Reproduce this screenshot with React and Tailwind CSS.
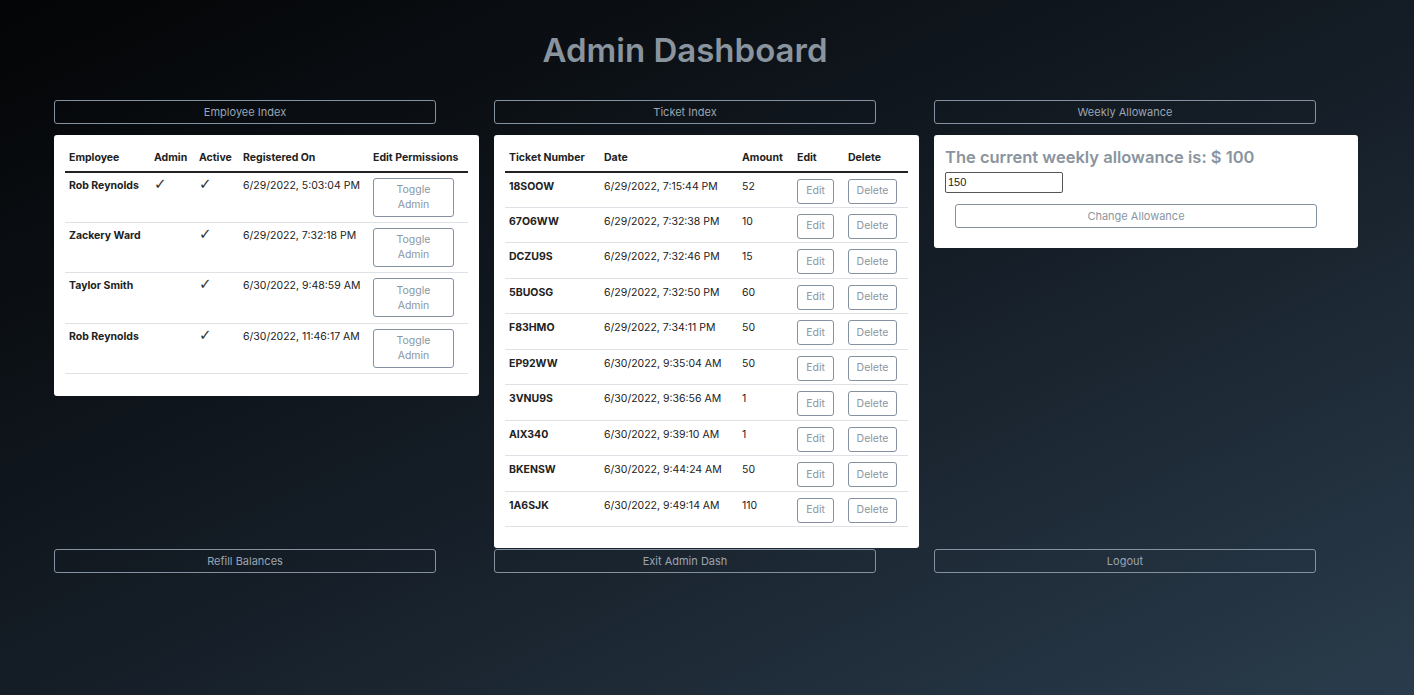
const employees = [
  { name: 'Rob Reynolds', admin: true, active: true, date: '6/29/2022, 5:03:04 PM' },
  { name: 'Zackery Ward', admin: false, active: true, date: '6/29/2022, 7:32:18 PM' },
  { name: 'Taylor Smith', admin: false, active: true, date: '6/30/2022, 9:48:59 AM' },
  { name: 'Rob Reynolds', admin: false, active: true, date: '6/30/2022, 11:46:17 AM' },
]

const tickets = [
  { id: '18SOOW', date: '6/29/2022, 7:15:44 PM', amount: 52 },
  { id: '67O6WW', date: '6/29/2022, 7:32:38 PM', amount: 10 },
  { id: 'DCZU9S', date: '6/29/2022, 7:32:46 PM', amount: 15 },
  { id: '5BUOSG', date: '6/29/2022, 7:32:50 PM', amount: 60 },
  { id: 'F83HMO', date: '6/29/2022, 7:34:11 PM', amount: 50 },
  { id: 'EP92WW', date: '6/30/2022, 9:35:04 AM', amount: 50 },
  { id: '3VNU9S', date: '6/30/2022, 9:36:56 AM', amount: 1 },
  { id: 'AIX340', date: '6/30/2022, 9:39:10 AM', amount: 1 },
  { id: 'BKENSW', date: '6/30/2022, 9:44:24 AM', amount: 50 },
  { id: '1A6SJK', date: '6/30/2022, 9:49:14 AM', amount: 110 },
]

function NavButton({ children }) {
  return (
    <button className="w-[382px] h-[24px] border border-[#8391a0] rounded-[3px] text-[11px] text-[#9aa5b1] bg-transparent">
      {children}
    </button>
  )
}

function Check() {
  return <span className="text-[15px] leading-none font-bold text-[#333] font-['DejaVu_Sans',sans-serif]">✓</span>
}

function SmallButton({ children, className }) {
  return (
    <button className={'border border-[#8391a0] rounded-[3px] text-[10.5px] text-[#8a96a2] bg-white ' + className}>
      {children}
    </button>
  )
}

export default function App() {
  return (
    <div className="min-h-[695px] w-full bg-[linear-gradient(155deg,#030405_0%,#141c25_50%,#2a3c4c_100%)] font-['Inter',sans-serif]">
      <h1 className="pt-[29px] h-[100px] pr-[44px] text-center text-[33px] leading-[42px] font-semibold text-[#8a949e]">
        Admin Dashboard
      </h1>

      <div className="grid grid-cols-[440px_440px_440px] pl-[54px]">
        {/* top nav buttons */}
        <div className="flex"><NavButton>Employee Index</NavButton></div>
        <div className="flex"><NavButton>Ticket Index</NavButton></div>
        <div className="flex"><NavButton>Weekly Allowance</NavButton></div>

        {/* employee card */}
        <div className="pt-[11px]">
          <div className="w-[425px] bg-white rounded-[3px] px-[11px] pt-[15px] pb-[22px]">
            <table className="w-full text-[10.5px] text-[#222] border-collapse whitespace-nowrap">
              <thead>
                <tr className="border-b-2 border-[#222]">
                  <th className="text-left font-bold px-[4px] pb-[5px] w-[85px]">Employee</th>
                  <th className="text-left font-bold px-[4px] pb-[5px] w-[45px]">Admin</th>
                  <th className="text-left font-bold px-[4px] pb-[5px] w-[44px]">Active</th>
                  <th className="text-left font-bold px-[4px] pb-[5px] w-[130px]">Registered On</th>
                  <th className="text-left font-bold px-[4px] pb-[5px]">Edit Permissions</th>
                </tr>
              </thead>
              <tbody>
                {employees.map((e, i) => (
                  <tr key={i} className="border-b border-[#dee2e6] align-top h-[50.5px]">
                    <td className="px-[4px] pt-[5px] font-bold">{e.name}</td>
                    <td className="px-[4px] pt-[4px]">{e.admin && <Check />}</td>
                    <td className="px-[4px] pt-[4px]">{e.active && <Check />}</td>
                    <td className="px-[4px] pt-[5px]">{e.date}</td>
                    <td className="px-[4px] pt-[5px] pb-[5px]">
                      <SmallButton className="w-[81px] h-[39px] leading-[15px]">
                        Toggle<br />Admin
                      </SmallButton>
                    </td>
                  </tr>
                ))}
              </tbody>
            </table>
          </div>
        </div>

        {/* ticket card */}
        <div className="pt-[11px]">
          <div className="w-[425px] bg-white rounded-[3px] px-[11px] pt-[15px] pb-[21px]">
            <table className="w-full text-[10.5px] text-[#222] border-collapse whitespace-nowrap">
              <thead>
                <tr className="border-b-2 border-[#222]">
                  <th className="text-left font-bold px-[4px] pb-[5px] w-[95px]">Ticket Number</th>
                  <th className="text-left font-bold px-[4px] pb-[5px] w-[138px]">Date</th>
                  <th className="text-left font-bold px-[4px] pb-[5px] w-[55px]">Amount</th>
                  <th className="text-left font-bold px-[4px] pb-[5px] w-[51px]">Edit</th>
                  <th className="text-left font-bold px-[4px] pb-[5px]">Delete</th>
                </tr>
              </thead>
              <tbody>
                {tickets.map((t) => (
                  <tr key={t.id} className="border-b border-[#dee2e6] align-top h-[35.5px]">
                    <td className="px-[4px] pt-[6px] font-bold">{t.id}</td>
                    <td className="px-[4px] pt-[6px]">{t.date}</td>
                    <td className="px-[4px] pt-[6px]">{t.amount}</td>
                    <td className="px-[4px] pt-[6px]">
                      <SmallButton className="w-[37px] h-[25px]">Edit</SmallButton>
                    </td>
                    <td className="px-[4px] pt-[6px]">
                      <SmallButton className="w-[49px] h-[25px]">Delete</SmallButton>
                    </td>
                  </tr>
                ))}
              </tbody>
            </table>
          </div>
        </div>

        {/* allowance card */}
        <div className="pt-[11px]">
          <div className="w-[424px] bg-white rounded-[3px] px-[11px] pt-[11px] pb-[20px]">
            <p className="text-[16.5px] leading-[22px] font-semibold text-[#8a949e]">
              The current weekly allowance is: $ 100
            </p>
            <input
              defaultValue="150"
              className="mt-[3px] w-[118px] h-[21px] border border-[#555] rounded-[2px] px-[2px] text-[11px] text-[#222] font-['Liberation_Sans',sans-serif] outline-none"
            />
            <div className="pl-[10px] mt-[9px]">
              <SmallButton className="w-[362px] h-[24px] text-[11px]">Change Allowance</SmallButton>
            </div>
          </div>
        </div>

        {/* bottom nav buttons */}
        <div className="flex pt-[1px]"><NavButton>Refill Balances</NavButton></div>
        <div className="flex pt-[1px]"><NavButton>Exit Admin Dash</NavButton></div>
        <div className="flex pt-[1px]"><NavButton>Logout</NavButton></div>
      </div>
    </div>
  )
}
